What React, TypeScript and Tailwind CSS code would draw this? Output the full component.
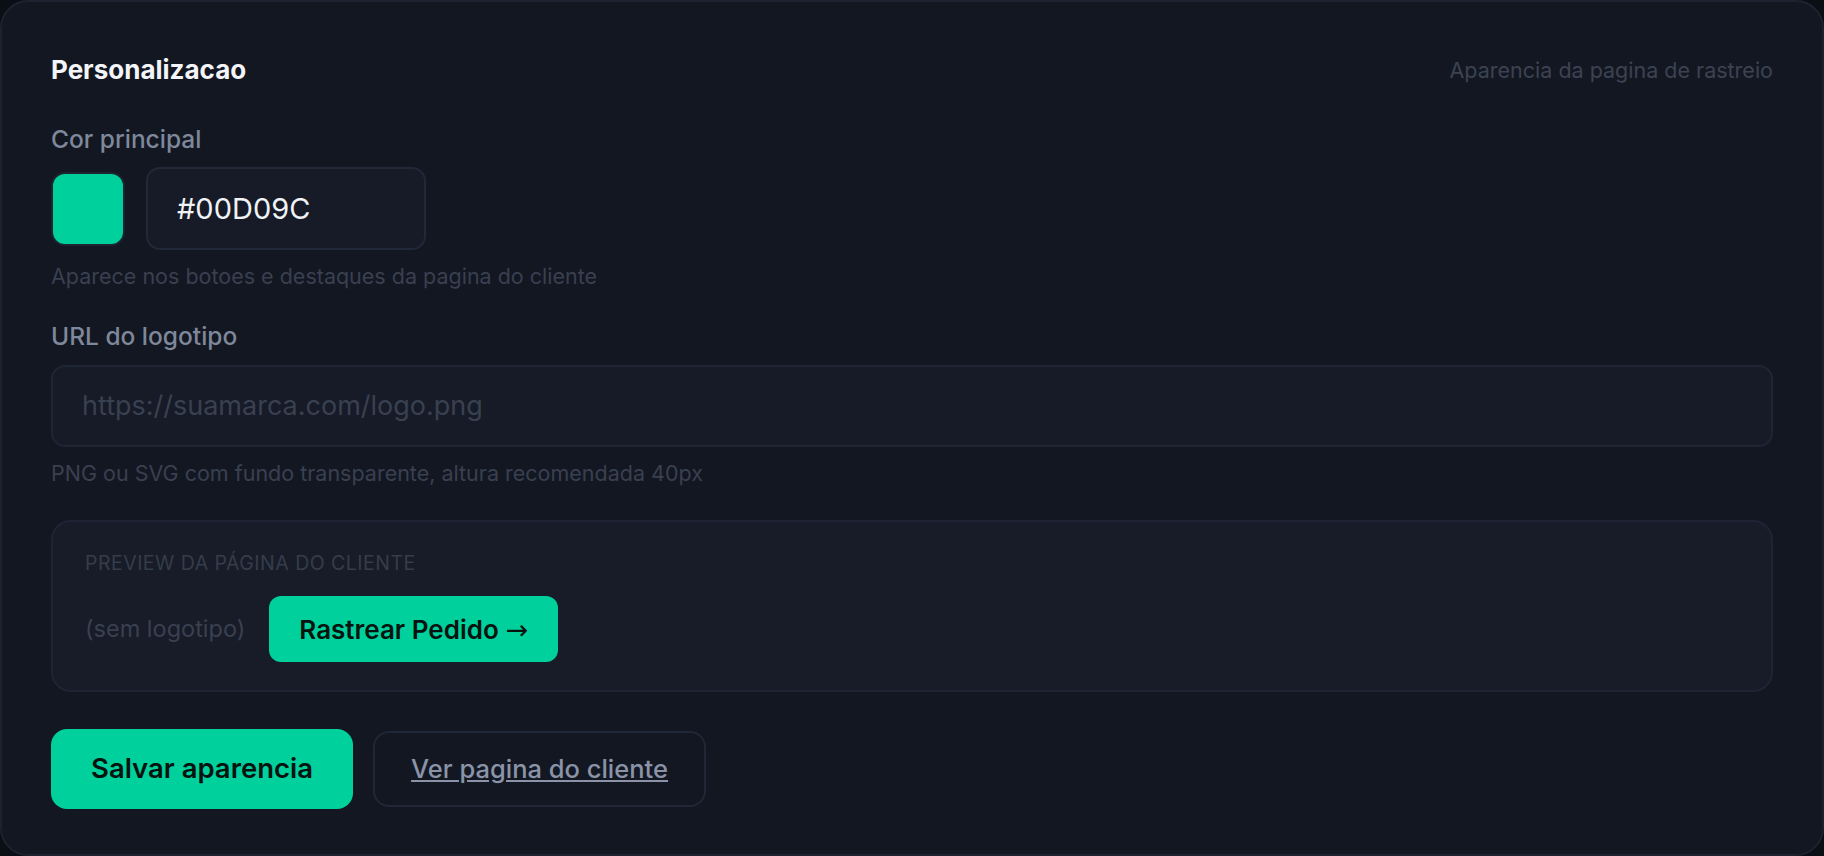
import React from 'react';

const App: React.FC = () => {
  return (
    <div className="min-h-screen w-full bg-[#0b0e14] font-['Inter',sans-serif]">
      <div className="h-[856px] w-full rounded-[28px] border-2 border-[#1c2230] bg-[#131722] px-[49px] pt-[52px]">
        {/* header */}
        <div className="flex h-8 items-center justify-between">
          <h2 className="text-[26px] font-bold leading-8 text-[#f3f5f8]">Personalizacao</h2>
          <span className="text-[21.5px] leading-8 text-[#3b4352]">Aparencia da pagina de rastreio</span>
        </div>

        {/* cor principal */}
        <div className="mt-[39px] text-[24.5px] font-medium leading-7 text-[#7f889b]">Cor principal</div>
        <div className="mt-[14px] flex items-center gap-[21px]">
          <div className="h-[74px] w-[74px] rounded-[14px] border-2 border-[#1d2330] bg-[#00d09c]" />
          <div className="flex h-[83px] w-[280px] items-center rounded-[14px] border-2 border-[#212837] bg-[#161b27] px-[29px] text-[29px] text-[#f0f2f5]">
            #00D09C
          </div>
        </div>
        <p className="mt-[14px] text-[21.5px] leading-6 text-[#394050]">
          Aparece nos botoes e destaques da pagina do cliente
        </p>

        {/* logo url */}
        <div className="mt-[34px] text-[24.5px] font-medium leading-7 text-[#7f889b]">URL do logotipo</div>
        <div className="mt-[15px] flex h-[82px] w-full items-center rounded-[14px] border-2 border-[#1e2534] bg-[#161b27] px-[29px] text-[27px] text-[#394151]">
          https://suamarca.com/logo.png
        </div>
        <p className="mt-[14px] text-[21.5px] leading-6 text-[#394050]">
          PNG ou SVG com fundo transparente, altura recomendada 40px
        </p>

        {/* preview */}
        <div className="mt-[35px] rounded-[20px] border-2 border-[#1e2434] bg-[#171c28] px-[32px] pb-[28px] pt-[29px]">
          <div className="text-[19.5px] uppercase leading-6 tracking-wide text-[#353c4a]">
            Preview da página do cliente
          </div>
          <div className="mt-[21px] flex items-center gap-[24px]">
            <span className="text-[23.5px] text-[#394050]">(sem logotipo)</span>
            <button className="flex h-[66px] items-center gap-[7px] rounded-[12px] bg-[#00d09c] px-[30px] text-[26px] font-semibold text-[#06130f]">
              Rastrear Pedido
              <span className="font-['DejaVu_Sans',sans-serif] text-[27px] font-normal leading-none">→</span>
            </button>
          </div>
        </div>

        {/* actions */}
        <div className="mt-[37px] flex items-center gap-[20px]">
          <button className="flex h-[80px] items-center rounded-[16px] bg-[#00d09c] px-[40px] text-[27.5px] font-semibold text-[#06130f]">
            Salvar aparencia
          </button>
          <button className="flex h-[76px] items-center rounded-[16px] border-2 border-[#202736] bg-transparent px-[36px] text-[25.5px] font-medium text-[#8a93a7] underline underline-offset-2">
            Ver pagina do cliente
          </button>
        </div>
      </div>
    </div>
  );
};

export default App;
